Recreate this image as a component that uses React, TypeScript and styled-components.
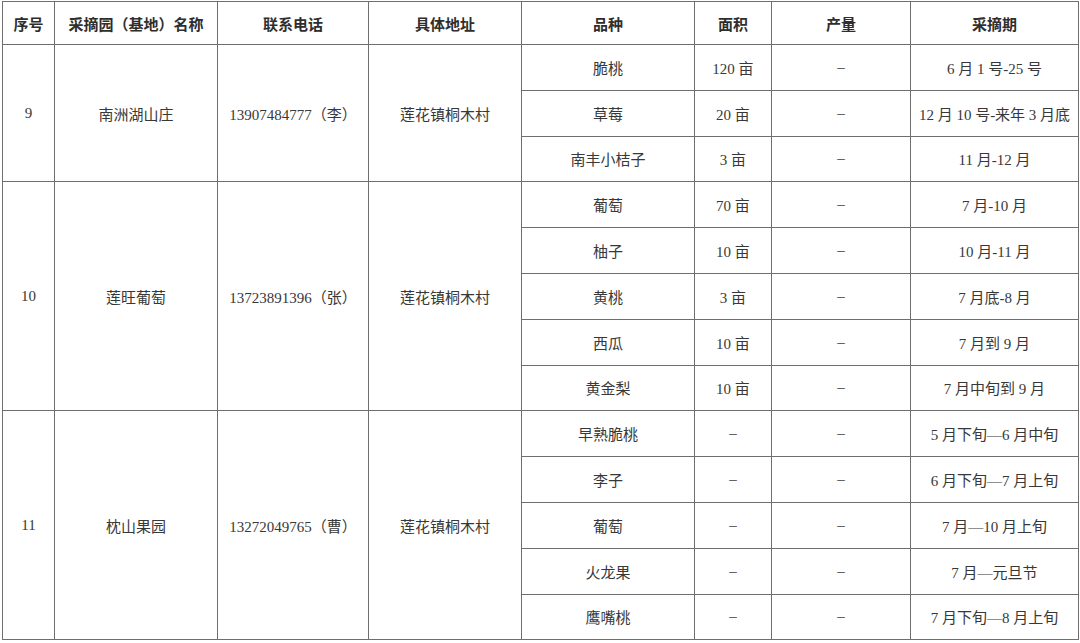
import React from "react";
import styled, { createGlobalStyle } from "styled-components";

const Global = createGlobalStyle`
  html, body { margin: 0; padding: 0; background: #fff; }
  body { font-family: "Liberation Serif", "Noto Sans CJK SC", serif; }
`;

const Page = styled.div`
  padding: 1px 0 0 2px;
  width: 1080px;
  box-sizing: border-box;
`;

const Table = styled.table`
  border-collapse: collapse;
  table-layout: fixed;
  width: 1077px;
  color: #333;
`;

const HeadCell = styled.th`
  border: 1px solid #6f6f6f;
  height: 42px;
  padding: 0;
  font-family: "Noto Sans CJK SC", sans-serif;
  font-weight: 700;
  font-size: 15px;
  color: #2e2e2e;
  text-align: center;
  vertical-align: middle;
`;

const Cell = styled.td`
  border: 1px solid #6f6f6f;
  height: 44.8px;
  padding: 0;
  font-size: 15px;
  text-align: center;
  vertical-align: middle;
  white-space: nowrap;
  color: #383838;
`;

const widths = [52, 163, 151, 153, 173, 77, 139, 168];
const headers = ["序号", "采摘园（基地）名称", "联系电话", "具体地址", "品种", "面积", "产量", "采摘期"];

type Item = [string, string, string];
type Group = { no: string; name: string; phone: string; addr: string; items: Item[] };

const groups: Group[] = [
  {
    no: "9",
    name: "南洲湖山庄",
    phone: "13907484777（李）",
    addr: "莲花镇桐木村",
    items: [
      ["脆桃", "120 亩", "6 月 1 号-25 号"],
      ["草莓", "20 亩", "12 月 10 号-来年 3 月底"],
      ["南丰小桔子", "3 亩", "11 月-12 月"],
    ],
  },
  {
    no: "10",
    name: "莲旺葡萄",
    phone: "13723891396（张）",
    addr: "莲花镇桐木村",
    items: [
      ["葡萄", "70 亩", "7 月-10 月"],
      ["柚子", "10 亩", "10 月-11 月"],
      ["黄桃", "3 亩", "7 月底-8 月"],
      ["西瓜", "10 亩", "7 月到 9 月"],
      ["黄金梨", "10 亩", "7 月中旬到 9 月"],
    ],
  },
  {
    no: "11",
    name: "枕山果园",
    phone: "13272049765（曹）",
    addr: "莲花镇桐木村",
    items: [
      ["早熟脆桃", "–", "5 月下旬—6 月中旬"],
      ["李子", "–", "6 月下旬—7 月上旬"],
      ["葡萄", "–", "7 月—10 月上旬"],
      ["火龙果", "–", "7 月—元旦节"],
      ["鹰嘴桃", "–", "7 月下旬—8 月上旬"],
    ],
  },
];

export default function App() {
  return (
    <Page>
      <Global />
      <Table>
        <colgroup>
          {widths.map((w, i) => (
            <col key={i} style={{ width: w }} />
          ))}
        </colgroup>
        <thead>
          <tr>
            {headers.map((h) => (
              <HeadCell key={h}>{h}</HeadCell>
            ))}
          </tr>
        </thead>
        <tbody>
          {groups.map((g) =>
            g.items.map((it, i) => (
              <tr key={g.no + i}>
                {i === 0 && (
                  <>
                    <Cell rowSpan={g.items.length}>{g.no}</Cell>
                    <Cell rowSpan={g.items.length}>{g.name}</Cell>
                    <Cell rowSpan={g.items.length}>{g.phone}</Cell>
                    <Cell rowSpan={g.items.length}>{g.addr}</Cell>
                  </>
                )}
                <Cell>{it[0]}</Cell>
                <Cell>{it[1]}</Cell>
                <Cell>–</Cell>
                <Cell>{it[2]}</Cell>
              </tr>
            ))
          )}
        </tbody>
      </Table>
    </Page>
  );
}
